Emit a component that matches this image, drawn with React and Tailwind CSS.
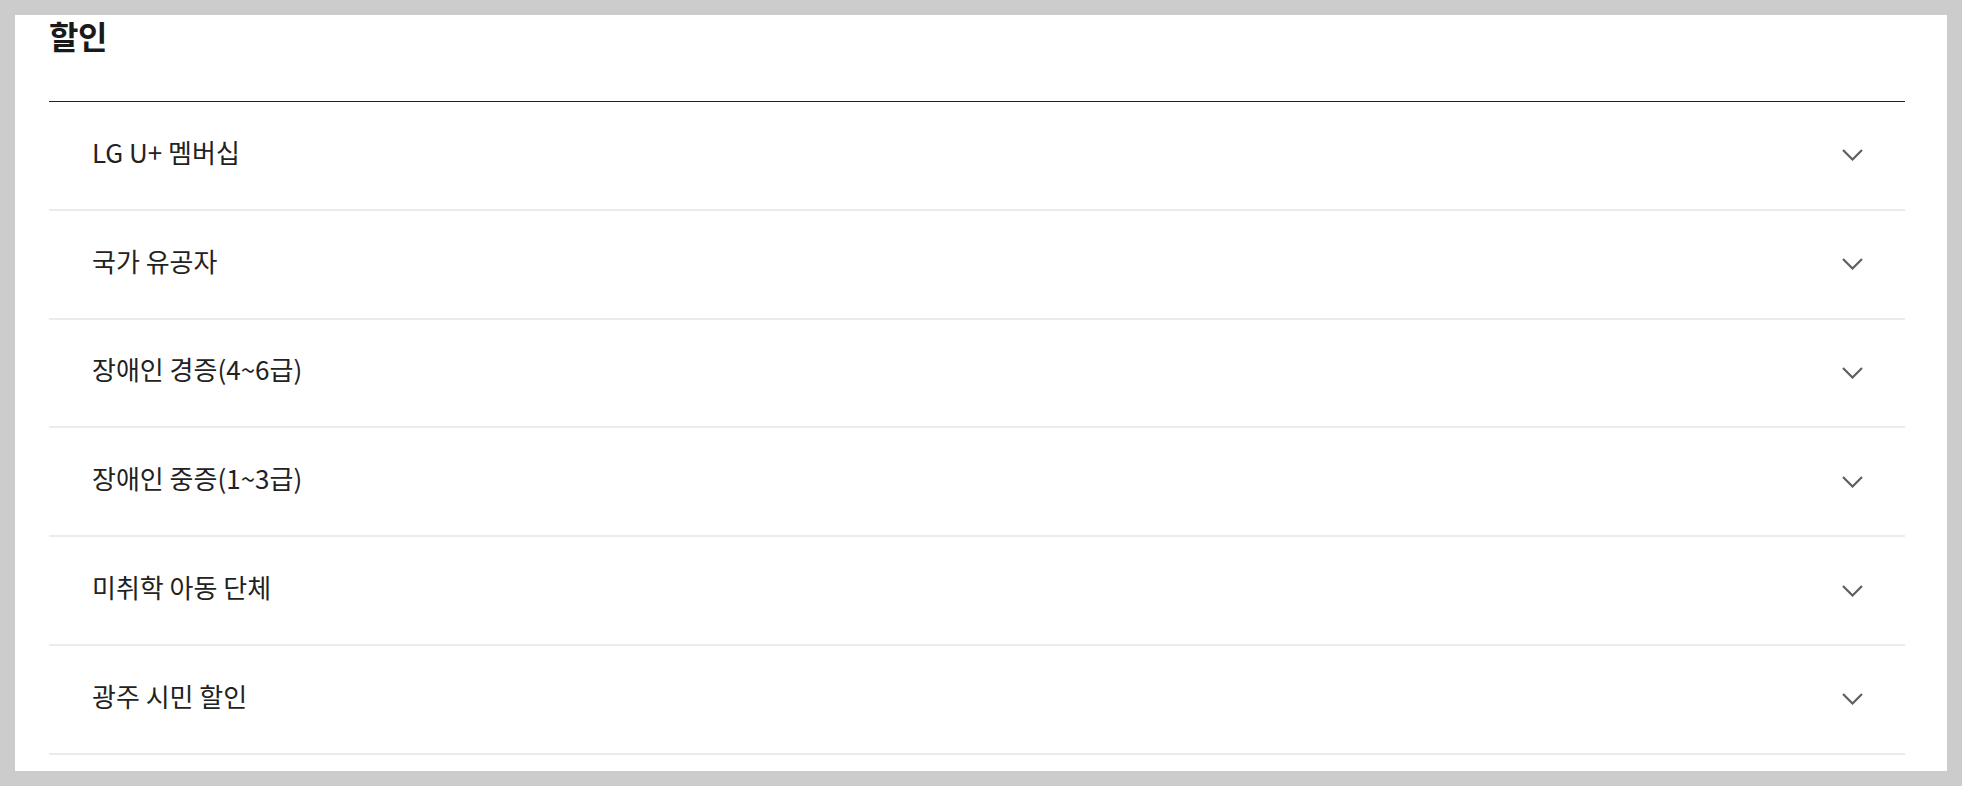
const items = [
  'LG U+ 멤버십',
  '국가 유공자',
  '장애인 경증(4~6급)',
  '장애인 중증(1~3급)',
  '미취학 아동 단체',
  '광주 시민 할인',
];

export default function App() {
  return (
    <div
      className="bg-[#cccccc] p-[15px] h-[786px] overflow-hidden"
      style={{ fontFamily: '"Noto Sans CJK KR", "Noto Sans", sans-serif' }}
    >
      <div className="bg-white h-[756px] pl-[34px] pr-[42px]">
        {/* Title */}
        <div className="h-[87px] border-b border-[#222222] pt-[4px]">
          <h2 className="text-[32px] leading-[32px] font-bold text-[#1a1a1a] tracking-[-0.5px]">할인</h2>
        </div>

        {/* Accordion */}
        <ul>
          {items.map((label) => (
            <li key={label}>
              <button className="w-full h-[108.8px] border-b-2 border-[#ebebeb] flex items-center justify-between px-[43px] text-left">
                <span className="text-[26px] text-[#222222] -mt-[8px]">{label}</span>
                <ChevronDown />
              </button>
            </li>
          ))}
        </ul>
      </div>
    </div>
  );
}

function ChevronDown() {
  return (
    <svg width="21" height="12" viewBox="0 0 21 12" fill="none" className="mr-[-1px]">
      <path d="M1 1 L10.5 10.5 L20 1" stroke="#5f5f5f" strokeWidth="2.2" />
    </svg>
  );
}
